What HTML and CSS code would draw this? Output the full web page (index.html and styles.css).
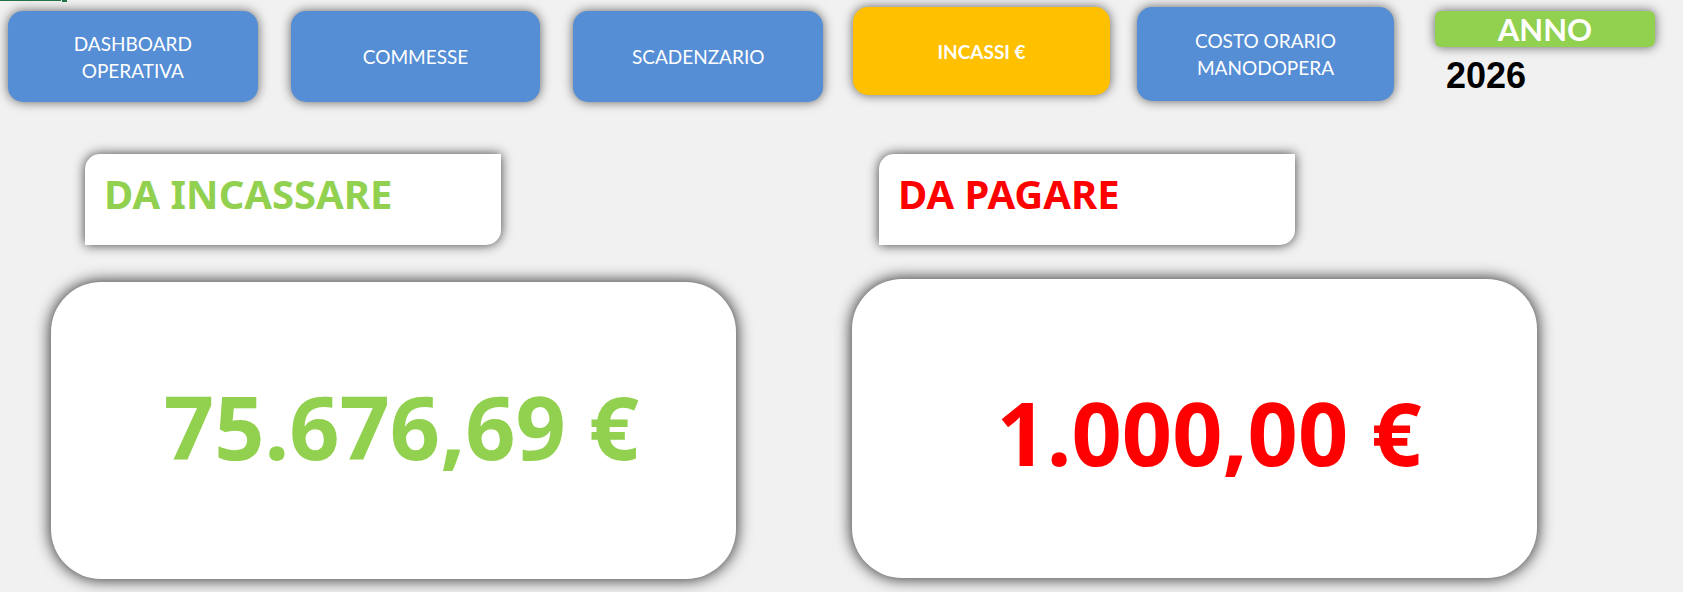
FILE: index.html
```html
<!DOCTYPE html>
<html lang="it">
<head>
  <meta charset="UTF-8">
  <meta name="viewport" content="width=device-width, initial-scale=1.0">
  <title>Incassi</title>
  <link rel="stylesheet" href="styles.css">
</head>
<body>
  <div class="cell-cursor"></div>

  <header class="topbar">
    <nav class="menu">
      <a href="#dashboard">DASHBOARD<br>OPERATIVA</a>
      <a href="#commesse">COMMESSE</a>
      <a href="#scadenzario">SCADENZARIO</a>
    </nav>
    <nav class="menu menu-right">
      <a href="#incassi" class="active">INCASSI €</a>
      <a href="#costo-orario">COSTO ORARIO<br>MANODOPERA</a>
    </nav>
    <div class="year">
      <div class="year-label">ANNO</div>
      <div class="year-value">2026</div>
    </div>
  </header>

  <main class="totals">
    <section class="total income">
      <h2>DA INCASSARE</h2>
      <div class="card">75.676,69 €</div>
    </section>
    <section class="total expense">
      <h2>DA PAGARE</h2>
      <div class="card">1.000,00 €</div>
    </section>
  </main>
</body>
</html>
```
FILE: styles.css
```css
* {
  box-sizing: border-box;
}
body {
  margin: 0;
  background-color: #f1f1f1;
  font-family: "Noto Sans", sans-serif;
}

/* selected cell border, top left */
.cell-cursor {
  position: absolute;
  top: 0;
  left: 0;
  width: 61px;
  height: 1px;
  background: #217346;
}
.cell-cursor::after {
  content: "";
  position: absolute;
  top: 0;
  left: 62px;
  width: 5px;
  height: 2px;
  background: #217346;
}

.topbar {
  display: grid;
  grid-template-columns: 815fr 30px 541fr 41px 220fr;
  padding: 7px 28px 0 8px;
  height: 102px;
}
.menu {
  display: grid;
  grid-template-columns: repeat(3, 1fr);
  gap: 33px;
  padding-top: 4px;
  font-family: Lato, sans-serif;
}
.menu-right {
  grid-column: 3;
  grid-template-columns: repeat(2, 1fr);
  gap: 27px;
  padding: 0 0 1px;
}
.menu a {
  display: flex;
  align-items: center;
  justify-content: center;
  border-radius: 15px;
  background: #558ed5;
  color: #fff;
  font-size: 19px;
  line-height: 27px;
  text-align: center;
  text-decoration: none;
  box-shadow: 0 0 11px rgba(0, 0, 0, 0.6);
}
.menu a.active {
  margin-bottom: 6px;
  background: #ffc000;
  font-weight: bold;
}

.year {
  grid-column: 5;
  padding-top: 4px;
}
.year-label {
  height: 36px;
  border-radius: 6px;
  background: #92d050;
  color: #fff;
  font: bold 31px/36px Lato, sans-serif;
  text-align: center;
  box-shadow: 0 0 11px rgba(0, 0, 0, 0.6);
}
.year-value {
  padding: 9px 0 0 11px;
  font: bold 36px/40px "Liberation Sans", Arial, sans-serif;
  color: #000;
}

.totals {
  display: grid;
  grid-template-columns: 1fr 1fr;
  gap: 116px;
  padding: 52px 146px 13px 51px;
}
.total h2 {
  width: 416px;
  height: 91px;
  margin: 0 0 37px 34px;
  padding: 12px 19px;
  border-radius: 15px 0 15px 0;
  background: #fff;
  font-size: 40px;
  line-height: 56px;
  box-shadow: 0 0 12px rgba(0, 0, 0, 0.75);
}
.card {
  display: flex;
  align-items: center;
  justify-content: center;
  height: 297px;
  padding: 0 0 10px 16px;
  border-radius: 50px;
  background: #fff;
  font-size: 88px;
  font-weight: bold;
  white-space: nowrap;
  box-shadow: 0 0 15px 1px rgba(0, 0, 0, 0.8);
}
.income {
  color: #92d050;
}
.expense {
  color: #f00;
}
.expense h2 {
  margin: 0 0 34px 27px;
}
.expense .card {
  height: 299px;
  padding: 6px 0 0 29px;
}
```
